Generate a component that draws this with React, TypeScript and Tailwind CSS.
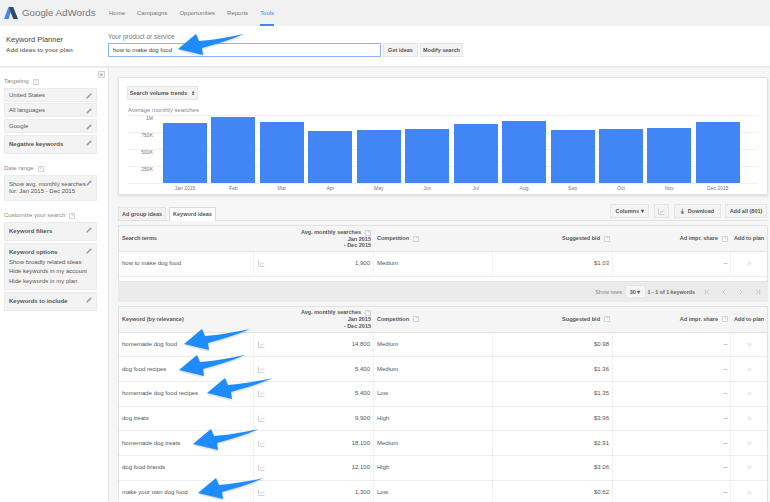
import { ChevronFirst, ChevronLast, ChevronLeft, ChevronRight, ChevronsRight, Pencil } from "lucide-react";

const font = { fontFamily: '"Liberation Sans", Arial, sans-serif' };

const bars = [
  { label: "Jan 2015", top: 123 },
  { label: "Feb", top: 117 },
  { label: "Mar", top: 122 },
  { label: "Apr", top: 131 },
  { label: "May", top: 130 },
  { label: "Jun", top: 129 },
  { label: "Jul", top: 124 },
  { label: "Aug", top: 121 },
  { label: "Sep", top: 130 },
  { label: "Oct", top: 129 },
  { label: "Nov", top: 128 },
  { label: "Dec 2015", top: 122 },
];

const keywords = [
  ["homemade dog food", "14,800", "Medium", "$0.98"],
  ["dog food recipes", "5,400", "Medium", "$1.36"],
  ["homemade dog food recipes", "5,400", "Low", "$1.35"],
  ["dog treats", "9,900", "High", "$3.96"],
  ["homemade dog treats", "18,100", "Medium", "$2.91"],
  ["dog food brands", "12,100", "High", "$3.06"],
  ["make your own dog food", "1,300", "Low", "$0.62"],
];

// tip positions of the blue annotation arrows
const arrows = [
  [178, 49],
  [184, 344],
  [179, 370],
  [207, 393],
  [193, 444],
  [198, 493],
];

const Help = () => (
  <span className="ml-1 inline-flex h-[6px] w-[6px] items-center justify-center border border-gray-300 bg-white text-[4px] font-normal leading-none text-gray-400">
    ?
  </span>
);

const Edit = () => <Pencil className="h-[6px] w-[6px] fill-gray-400 text-gray-400" strokeWidth={1} />;

const TrendIcon = () => (
  <svg viewBox="0 0 8 8" className="h-[7px] w-[7px]" fill="none" stroke="#c4c4c4" strokeWidth="0.9">
    <path d="M0.5 0.5V7.5H7.5" />
    <path d="M2 5.5L3.8 3.8L5 4.8L7 2.5" />
  </svg>
);

const Arrow = ({ x, y }: { x: number; y: number }) => (
  <svg
    className="absolute h-[28px] w-[70px] overflow-visible drop-shadow-[0_1px_1px_rgba(0,0,0,0.2)]"
    style={{ left: x, top: y - 18 }}
    viewBox="0 0 70 28"
    fill="#1e8cff"
  >
    <path d="M0 18L18 3L21 10C35 9 52 6 66 3C52 9 38 13 24 17L25 24Z" />
  </svg>
);

const SideBox = ({ className, children }: { className: string; children: React.ReactNode }) => (
  <div className={`relative ml-1 w-[93px] whitespace-nowrap border border-[#ebebeb] bg-[#f3f3f3] pl-[4px] text-[6px] text-[#555] ${className}`}>
    {children}
    <span className="absolute right-1 top-1">
      <Edit />
    </span>
  </div>
);

const Label = ({ className, children }: { className: string; children: React.ReactNode }) => (
  <p className={`ml-1 h-[9px] text-[6px] leading-[9px] text-[#888] ${className}`}>
    {children}
    <Help />
  </p>
);

const Sidebar = () => (
  <aside className="w-[109px] shrink-0 border-r border-[#e2e2e2] bg-white">
    <div className="flex justify-end pr-[3px] pt-[3px]">
      <span className="flex h-[7px] w-[7px] items-center justify-center border border-gray-300 bg-[#f5f5f5] text-[5px] leading-none text-gray-500">
        «
      </span>
    </div>
    <Label className="mt-[-1px]">Targeting</Label>
    <SideBox className="mt-[2px] flex h-[14px] items-center">United States</SideBox>
    <SideBox className="mt-[1px] flex h-[14px] items-center">All languages</SideBox>
    <SideBox className="mt-[2px] flex h-[14px] items-center">Google</SideBox>
    <SideBox className="mt-[2px] flex h-[19px] items-center font-bold">Negative keywords</SideBox>
    <Label className="mt-[10px]">Date range</Label>
    <SideBox className="mt-[2px] h-[26px] pt-[5px] leading-[7px]">
      Show avg. monthly searches
      <br />
      for: Jan 2015 - Dec 2015
    </SideBox>
    <Label className="mt-[10px]">Customize your search</Label>
    <SideBox className="mt-[2px] flex h-[19px] items-center font-bold">Keyword filters</SideBox>
    <SideBox className="mt-[2px] h-[47px] pt-[4px] leading-[9.5px]">
      <p className="font-bold">Keyword options</p>
      <p>Show broadly related ideas</p>
      <p>Hide keywords in my account</p>
      <p>Hide keywords in my plan</p>
    </SideBox>
    <SideBox className="mt-[2px] flex h-[19px] items-center font-bold">Keywords to include</SideBox>
  </aside>
);

const Chart = () => (
  <div className="ml-[9px] mr-[2px] mt-[9px] h-[118px] rounded-[1px] border border-[#e2e2e2] bg-white px-2 pt-2 shadow-sm">
    <button className="flex h-[14px] w-[71px] items-center justify-center rounded-[1px] border border-[#e5e5e5] bg-[#f3f3f3] text-[5.5px] font-bold text-[#555]">
      Search volume trends
      <span className="ml-1 text-[5px] leading-none">⇕</span>
    </button>
    <p className="ml-[1px] mt-[6px] h-[8px] text-[6px] leading-[8px] text-[#888]">Average monthly searches</p>
    <div className="relative mt-[1px] h-[68px]">
      {[0, 17, 34, 51, 68].map((y) => (
        <div key={y} className="absolute left-[1px] right-[1px] border-t border-[#f0f0f0]" style={{ top: y }} />
      ))}
      {[
        ["1M", 0],
        ["750K", 17],
        ["500K", 34],
        ["250K", 51],
      ].map(([t, y]) => (
        <span key={t} className="absolute left-0 w-[26px] text-right text-[5px] leading-[7px] text-[#777]" style={{ top: y as number }}>
          {t}
        </span>
      ))}
      <div className="absolute bottom-0 left-[36px] top-0 flex items-end gap-[4.45px]">
        {bars.map((b) => (
          <div key={b.label} className="w-[44px] bg-[#4285f4]" style={{ height: 183 - b.top }} />
        ))}
      </div>
    </div>
    <div className="ml-[36px] mt-[1px] flex gap-[4.45px]">
      {bars.map((b) => (
        <span key={b.label} className="w-[44px] text-center text-[5px] leading-[8px] text-[#777]">
          {b.label}
        </span>
      ))}
    </div>
  </div>
);

const Toolbar = () => (
  <div className="ml-[9px] mr-[2px] mt-[9px] flex h-[17px] items-start justify-between border-b border-[#e2e2e2]">
    <div className="flex h-[16px] gap-[3px] pt-[3px] text-[5.5px] font-bold text-[#555]">
      <span className="flex h-[13px] w-[48px] items-center justify-center rounded-t-[1px] border border-b-0 border-[#e5e5e5] bg-[#f1f1f1]">Ad group ideas</span>
      <span className="flex h-[14px] w-[47px] items-center justify-center rounded-t-[1px] border border-b-0 border-[#dcdcdc] bg-white">Keyword ideas</span>
    </div>
    <div className="mr-[1px] flex h-[14px] gap-[5px] text-[5.5px] font-bold text-[#555]">
      <span className="flex w-[39px] items-center justify-center border border-[#e5e5e5] bg-[#f3f3f3]">Columns ▾</span>
      <span className="flex w-[15px] items-center justify-center border border-[#e5e5e5] bg-[#f3f3f3]">
        <TrendIcon />
      </span>
      <span className="flex w-[47px] items-center justify-center border border-[#e5e5e5] bg-[#f3f3f3]">
        <span className="mr-1 text-[6px] leading-none">⤓</span>Download
      </span>
      <span className="ml-[-1px] flex w-[42px] items-center justify-center border border-[#e5e5e5] bg-[#f3f3f3]">Add all (801)</span>
    </div>
  </div>
);

const TableHeader = ({ title }: { title: string }) => (
  <div className="grid h-[26px] grid-cols-[135px_120px_119px_120px_118px_36px] border-b border-[#e5e5e5] bg-[#f5f5f5] text-[5.5px] font-bold leading-[6.5px] text-[#555]">
    <div className="flex items-center pl-[3px]">{title}</div>
    <div className="flex flex-col items-end justify-center pr-[3px]">
      <span>
        Avg. monthly searches
        <Help />
      </span>
      <span>Jan 2015</span>
      <span>- Dec 2015</span>
    </div>
    <div className="flex items-center pl-[3px]">
      Competition
      <Help />
    </div>
    <div className="flex items-center justify-end pr-[3px]">
      Suggested bid
      <Help />
    </div>
    <div className="flex items-center justify-end pr-[3px]">
      Ad impr. share
      <Help />
    </div>
    <div className="flex items-center justify-center whitespace-nowrap">Add to plan</div>
  </div>
);

const Row = ({ row }: { row: string[] }) => (
  <div className="grid h-[24.7px] grid-cols-[135px_120px_119px_120px_118px_36px] border-b border-[#eeeeee] bg-white text-[6px] text-[#555]">
    <div className="flex items-center border-r border-[#f2f2f2] pl-[3px]">{row[0]}</div>
    <div className="flex items-center justify-between border-r border-[#f2f2f2] pl-[4px] pr-[3px]">
      <TrendIcon />
      <span>{row[1]}</span>
    </div>
    <div className="flex items-center border-r border-[#f2f2f2] pl-[3px]">{row[2]}</div>
    <div className="flex items-center justify-end border-r border-[#f2f2f2] pr-[3px]">{row[3]}</div>
    <div className="flex items-center justify-end border-r border-[#f2f2f2] pr-[3px]">–</div>
    <div className="flex items-center justify-center">
      <ChevronsRight className="h-[7px] w-[7px] text-[#bdbdbd]" />
    </div>
  </div>
);

const Pager = () => (
  <div className="ml-[9px] mr-[2px] flex h-[20px] items-center justify-end bg-[#ebebeb] pr-[6px] text-[5.5px] leading-[8px] text-[#888]">
    <span>Show rows:</span>
    <span className="ml-[1px] flex h-[13px] w-[21px] items-center justify-center border border-[#e5e5e5] bg-[#f5f5f5] font-bold text-[#555]">30 ▾</span>
    <span className="ml-[2px] text-[5.3px] font-bold leading-[8px] text-[#666]">1 - 1 of 1 keywords</span>
    <div className="ml-[8px] flex gap-[9px] text-[#b5b5b5]">
      <ChevronFirst className="h-2 w-2" />
      <ChevronLeft className="h-2 w-2" />
      <ChevronRight className="h-2 w-2" />
      <ChevronLast className="h-2 w-2" />
    </div>
  </div>
);

export default function App() {
  return (
    <div className="relative h-[502px] w-[770px] overflow-hidden bg-white" style={font}>
      <header className="flex h-[26px] items-center bg-[#f1f1f1]">
        <svg viewBox="0 0 14 14" className="ml-1 h-[14px] w-[14px]">
          <path d="M4.5 1L0 13H4.5L6.8 6Z" fill="#4285f4" />
          <path d="M4.6 1H9.2L14 13H9.3Z" fill="#2f4a6e" />
        </svg>
        <span className="ml-[4px] w-[87px] whitespace-nowrap text-[9.75px] text-[#777]">Google AdWords</span>
        <nav className="flex h-full items-center gap-3 text-[6px] text-[#777]">
          <span>Home</span>
          <span>Campaigns</span>
          <span>Opportunities</span>
          <span>Reports</span>
          <span className="flex h-full items-center border-b-2 border-[#4285f4] pt-[2px] text-[#4285f4]">Tools</span>
        </nav>
      </header>

      <section className="flex h-[42px] border-b-2 border-[#ececec] bg-white">
        <div className="w-[108px] pl-[6px] pt-[9px]">
          <p className="text-[7.5px] leading-[10px] text-[#444]">Keyword Planner</p>
          <p className="mt-[1px] text-[6.2px] font-bold leading-[8px] text-[#777]">Add ideas to your plan</p>
        </div>
        <div className="pt-[7px]">
          <p className="h-[10px] text-[6.5px] leading-[8px] text-[#777]">Your product or service</p>
          <div className="flex gap-[2px]">
            <div className="flex h-[14px] w-[273px] items-center border border-[#8ab4f8] pl-[4px] text-[6px] text-[#444]">how to make dog food</div>
            <span className="flex h-[14px] w-[35px] items-center justify-center border border-[#e5e5e5] bg-[#f3f3f3] text-[5.5px] font-bold text-[#555]">Get ideas</span>
            <span className="flex h-[14px] w-[43px] items-center justify-center border border-[#e5e5e5] bg-[#f3f3f3] text-[5.5px] font-bold text-[#555]">Modify search</span>
          </div>
        </div>
      </section>

      <div className="flex h-[434px]">
        <Sidebar />
        <main className="min-w-0 flex-1 bg-[#f6f6f6]">
          <Chart />
          <Toolbar />
          <div className="ml-[9px] mr-[2px] mt-[4px] border border-[#e2e2e2] bg-white pb-[4px]">
            <TableHeader title="Search terms" />
            <Row row={["how to make dog food", "1,900", "Medium", "$1.03"]} />
          </div>
          <Pager />
          <div className="ml-[9px] mr-[2px] mt-[4px] border border-[#e2e2e2]">
            <TableHeader title="Keyword (by relevance)" />
            {keywords.map((row) => (
              <Row key={row[0]} row={row} />
            ))}
          </div>
        </main>
      </div>

      {arrows.map(([x, y]) => (
        <Arrow key={y} x={x} y={y} />
      ))}
    </div>
  );
}
